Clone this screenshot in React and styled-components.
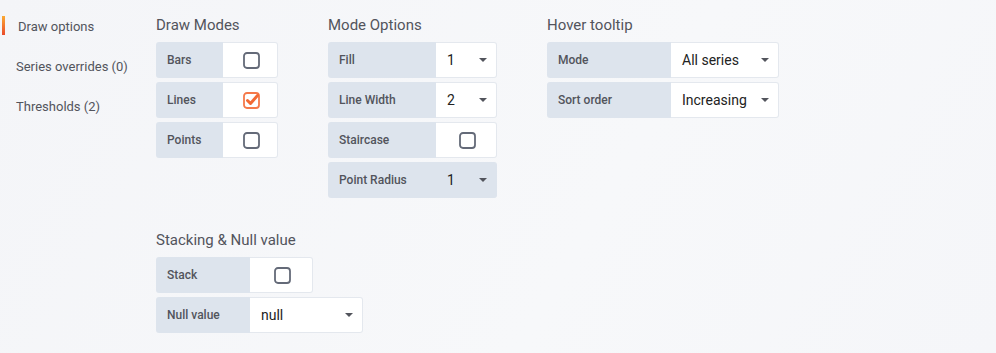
import React from 'react'
import styled, { createGlobalStyle } from 'styled-components'

const GlobalStyle = createGlobalStyle`
   html, body {
      margin: 0;
      padding: 0;
      background: #f5f6f9;
      font-family: Roboto, "Liberation Sans", Arial, sans-serif;
   }
`

const Page = styled.div`
   display: flex;
   width: 996px;
   height: 353px;
   background: linear-gradient(120deg, #f4f5f8 0%, #f7f8fa 60%, #f5f6f9 100%);
   overflow: hidden;
`

const Sidebar = styled.nav`
   display: flex;
   flex-direction: column;
   width: 156px;
   padding-top: 6px;
   flex-shrink: 0;
`

const NavItem = styled.div`
   display: flex;
   align-items: center;
   height: 40px;
   font-size: 13px;
   color: #52545c;
   margin-left: ${({ active }) => (active ? '2px' : '0')};
   padding-left: ${({ active }) => (active ? '16px' : '16px')};
   position: relative;
   &::before {
      content: '';
      display: ${({ active }) => (active ? 'block' : 'none')};
      position: absolute;
      left: 0;
      top: 10px;
      height: 19px;
      width: 3px;
      background: linear-gradient(180deg, #fbaa33 0%, #ea4a2a 100%);
   }
`

const Main = styled.div`
   display: flex;
   flex-direction: column;
   padding-top: 15px;
`

const SectionRow = styled.div`
   display: flex;
   gap: 50px;
`

const Section = styled.div`
   display: flex;
   flex-direction: column;
   margin-top: ${({ top }) => top || 0}px;
`

const Heading = styled.div`
   font-size: 15px;
   line-height: 20px;
   color: #52545c;
   margin-bottom: 7px;
`

const Rows = styled.div`
   display: flex;
   flex-direction: column;
   gap: 4px;
`

const Row = styled.div`
   display: flex;
   height: 36px;
`

const Label = styled.div`
   display: flex;
   align-items: center;
   box-sizing: border-box;
   width: ${({ width }) => width}px;
   padding-left: 11px;
   background: #dde4ed;
   border-radius: 3px 0 0 3px;
   font-size: 12px;
   font-weight: 500;
   color: #52545c;
`

const Field = styled.div`
   display: flex;
   align-items: center;
   justify-content: ${({ center }) => (center ? 'center' : 'space-between')};
   box-sizing: border-box;
   width: ${({ width }) => width}px;
   padding: 0 9px 0 11px;
   background: ${({ muted }) => (muted ? '#dde4ed' : '#fff')};
   border: 1px solid ${({ muted }) => (muted ? '#dde4ed' : '#e4e8ee')};
   border-left: none;
   border-radius: 0 3px 3px 0;
   font-size: 14px;
   color: #222;
`

const Caret = styled.span`
   width: 0;
   height: 0;
   border-left: 4px solid transparent;
   border-right: 4px solid transparent;
   border-top: 4px solid #52545c;
`

const Checkbox = ({ checked }) => (
   <svg width="17" height="17" viewBox="0 0 17 17">
      <rect
         x="1"
         y="1"
         width="15"
         height="15"
         rx="3"
         fill="none"
         stroke={checked ? '#f5794a' : '#646a78'}
         strokeWidth="1.8"
      />
      {checked && (
         <path
            d="M4.5 8.5 L7.5 11.5 L14.5 3.5"
            fill="none"
            stroke="#f26a35"
            strokeWidth="3"
            strokeLinecap="round"
            strokeLinejoin="round"
         />
      )}
   </svg>
)

const CheckRow = ({ label, labelWidth, fieldWidth, checked }) => (
   <Row>
      <Label width={labelWidth}>{label}</Label>
      <Field width={fieldWidth} center>
         <Checkbox checked={checked} />
      </Field>
   </Row>
)

const SelectRow = ({ label, labelWidth, fieldWidth, value, muted }) => (
   <Row>
      <Label width={labelWidth}>{label}</Label>
      <Field width={fieldWidth} muted={muted}>
         <span>{value}</span>
         <Caret />
      </Field>
   </Row>
)

const App = () => {
   return (
      <>
         <GlobalStyle />
         <Page>
            <Sidebar>
               <NavItem active>Draw options</NavItem>
               <NavItem>Series overrides (0)</NavItem>
               <NavItem>Thresholds (2)</NavItem>
            </Sidebar>
            <Main>
               <SectionRow>
                  <Section>
                     <Heading>Draw Modes</Heading>
                     <Rows>
                        <CheckRow label="Bars" labelWidth={67} fieldWidth={55} />
                        <CheckRow label="Lines" labelWidth={67} fieldWidth={55} checked />
                        <CheckRow label="Points" labelWidth={67} fieldWidth={55} />
                     </Rows>
                  </Section>
                  <Section>
                     <Heading>Mode Options</Heading>
                     <Rows>
                        <SelectRow label="Fill" labelWidth={108} fieldWidth={61} value="1" />
                        <SelectRow label="Line Width" labelWidth={108} fieldWidth={61} value="2" />
                        <CheckRow label="Staircase" labelWidth={108} fieldWidth={61} />
                        <SelectRow label="Point Radius" labelWidth={108} fieldWidth={61} value="1" muted />
                     </Rows>
                  </Section>
                  <Section>
                     <Heading>Hover tooltip</Heading>
                     <Rows>
                        <SelectRow label="Mode" labelWidth={124} fieldWidth={108} value="All series" />
                        <SelectRow label="Sort order" labelWidth={124} fieldWidth={108} value="Increasing" />
                     </Rows>
                  </Section>
               </SectionRow>
               <Section top={32}>
                  <Heading>Stacking &amp; Null value</Heading>
                  <Rows>
                     <CheckRow label="Stack" labelWidth={94} fieldWidth={63} />
                     <SelectRow label="Null value" labelWidth={94} fieldWidth={113} value="null" />
                  </Rows>
               </Section>
            </Main>
         </Page>
      </>
   )
}

export default App
